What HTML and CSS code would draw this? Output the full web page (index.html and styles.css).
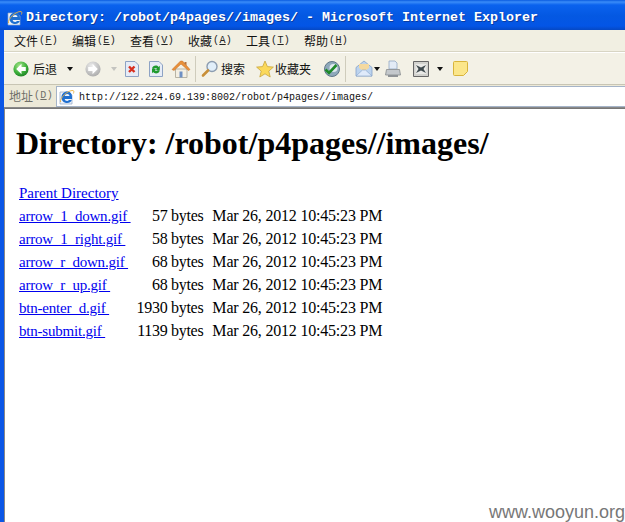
FILE: index.html
```html
<!DOCTYPE html>
<html lang="zh">
<head>
<meta charset="utf-8">
<title>Directory</title>
<link rel="stylesheet" href="styles.css">
</head>
<body>
<div class="window">
  <header class="titlebar">
    <svg class="ie-title" viewBox="0 0 16 16" width="16" height="16"><use href="#ie"/></svg>
    <span class="title-text">Directory: /robot/p4pages//images/ - Microsoft Internet Explorer</span>
  </header>
  <div class="frame">
    <nav class="menubar">
      <span class="menu">文件<small>(<u>F</u>)</small></span>
      <span class="menu">编辑<small>(<u>E</u>)</small></span>
      <span class="menu">查看<small>(<u>V</u>)</small></span>
      <span class="menu">收藏<small>(<u>A</u>)</small></span>
      <span class="menu">工具<small>(<u>T</u>)</small></span>
      <span class="menu">帮助<small>(<u>H</u>)</small></span>
    </nav>
    <div class="toolbar">
      <svg class="ico back" viewBox="0 0 22 22" width="22" height="22">
        <defs>
          <radialGradient id="g" cx="40%" cy="30%" r="75%"><stop offset="0" stop-color="#a5e58a"/><stop offset=".6" stop-color="#3fb13c"/><stop offset="1" stop-color="#1b7d22"/></radialGradient>
          <radialGradient id="s" cx="40%" cy="30%" r="75%"><stop offset="0" stop-color="#ececec"/><stop offset="1" stop-color="#a9a9a9"/></radialGradient>
        </defs>
        <circle cx="11" cy="11" r="7.6" fill="url(#g)"/>
        <path d="M11.500 5.800 6.200 11l5.300 5.200v-3.200h4.300V9h-4.300z" fill="#fff"/>
      </svg>
      <span class="tlabel back-label">后退</span>
      <span class="caret dark caret-back"></span>
      <svg class="ico forward" viewBox="0 0 22 22" width="22" height="22">
        <circle cx="11" cy="11" r="7.6" fill="url(#s)"/>
        <path d="M10.500 5.800 15.800 11l-5.300 5.200v-3.200H6.200V9h4.300z" fill="#fff"/>
      </svg>
      <span class="caret light caret-fwd"></span>
      <svg class="ico stop" viewBox="0 0 16 18" width="16" height="18">
        <path d="M1.500 1.500h9.500l3.500 3.500v11.500H1.500z" fill="#e6ecf7" stroke="#8ea3c4"/>
        <path d="m5 6.500 5.500 5.500m0-5.500L5 12" stroke="#d8301f" stroke-width="2.400"/>
      </svg>
      <svg class="ico refresh" viewBox="0 0 16 18" width="16" height="18">
        <path d="M1.500 1.500h9.500l3.500 3.500v11.500H1.500z" fill="#e6ecf7" stroke="#8ea3c4"/>
        <path d="M4 8.500C4.500 5.500 9 4.500 10.500 7l1.300-1.300v4.500H7.500l1.500-1.500C8 7.500 6.500 7.800 6 9z" fill="#1f9a2f"/>
        <path d="M11.800 10.500c-.5 3-5 4-6.500 1.500L4 13.300V8.800h4.300l-1.500 1.500c1 1.200 2.500.9 3-.3z" fill="#1f9a2f"/>
      </svg>
      <svg class="ico home" viewBox="0 0 20 20" width="20" height="20">
        <path d="M4.500 10h11.500v8.500H4.500z" fill="#f3efe3" stroke="#a8a494" stroke-width=".8"/>
        <path d="M8.500 12.500h3v6h-3z" fill="#6f90c4"/>
        <path d="M1 10.500 9.500 2h2l7.500 8.500-1.500 1L10 5l-7 6.500z" fill="#e8903a" stroke="#c56a20" stroke-width=".5"/>
        <path d="M13.500 3h2v3.500l-2-2z" fill="#b5733c"/>
      </svg>
      <span class="sep"></span>
      <svg class="ico search" viewBox="0 0 18 18" width="18" height="18">
        <circle cx="11" cy="6.500" r="5" fill="#e1effa" stroke="#8d9db0" stroke-width="1.400"/>
        <path d="m7 10.500-5 5" stroke="#c88f38" stroke-width="2.600" stroke-linecap="round"/>
      </svg>
      <span class="tlabel search-label">搜索</span>
      <svg class="ico star" viewBox="0 0 18 18" width="18" height="18">
        <path d="m9 1 2.400 5.600 6 .5-4.600 4 1.400 5.900L9 13.800 3.800 17l1.400-5.900-4.600-4 6-.5z" fill="#fbd95a" stroke="#c9a63d" stroke-width=".8"/>
      </svg>
      <span class="tlabel fav-label">收藏夹</span>
      <svg class="ico media" viewBox="0 0 18 18" width="18" height="18">
        <circle cx="9" cy="9" r="7.500" fill="#8fa9bb" stroke="#5e7688"/>
        <circle cx="10.500" cy="8" r="4" fill="#dfe9ef"/>
        <path d="M2.500 9.500 6 13l7.500-8" stroke="#1f8a2a" stroke-width="2.600" fill="none"/>
      </svg>
      <span class="sep sep2"></span>
      <svg class="ico mail" viewBox="0 0 18 18" width="18" height="18">
        <path d="M1 7.500 9 1l8 6.500V16H1z" fill="#bcd3ee" stroke="#85a2c8" stroke-width=".8"/>
        <path d="M4 8V4h10v4l-5 3.500z" fill="#f4d9a0"/>
        <path d="m1 16 6.500-6 3 0 6.500 6z" fill="#dfeafa" stroke="#85a2c8" stroke-width=".6"/>
      </svg>
      <span class="caret dark caret-mail"></span>
      <svg class="ico print" viewBox="0 0 16 18" width="16" height="18">
        <path d="M4 1h6l2 2v6H4z" fill="#e3ebf6" stroke="#93a8c4" stroke-width=".8"/>
        <path d="M1.500 9.500h13l1 5.500H.5z" fill="#c4c8cc" stroke="#868a8e" stroke-width=".8"/>
        <path d="M3 15h10v2H3z" fill="#8e9296"/>
      </svg>
      <svg class="ico word" viewBox="0 0 16 16" width="16" height="16">
        <path d="M.5.500h15v15H.5z" fill="#d2d2ce" stroke="#666"/>
        <path d="M2.500 3h11v10h-11z" fill="#e9e9e6"/>
        <path d="m3 4 5 2.500L13 4l-2.500 4 2.500 4-5-2.500L3 12l2.500-4z" fill="#3f4a4e"/>
      </svg>
      <span class="caret dark caret-word"></span>
      <svg class="ico note" viewBox="0 0 15 15" width="15" height="15">
        <path d="M1.500.500h12a1 1 0 0 1 1 1v9l-4 4h-9a1 1 0 0 1-1-1v-12a1 1 0 0 1 1-1z" fill="#fbe68b" stroke="#d8b43c"/>
      </svg>
    </div>
    <div class="addressbar">
      <span class="addr-label">地址<small>(<u>D</u>)</small></span>
      <div class="addr-field">
        <svg class="ie-addr" viewBox="0 0 16 16" width="16" height="16">
          <symbol id="ie" viewBox="0 0 16 16">
            <path d="M1 3h9l3 3v9H1z" fill="#eef3fb" stroke="#8ea3c4" stroke-width=".7"/>
            <path d="M3.500 8h9.500c.2-3.400-2-5.500-4.700-5.500C5 2.500 2.500 5 2.500 8.500c0 3.300 2.500 5.500 5.600 5.500 2.400 0 4-1.100 4.700-3H9.900c-.4.700-1 1-1.800 1-1.300 0-2.300-.8-2.400-2H13V8M5.700 7c.2-1.200 1.200-2 2.500-2s2.200.8 2.300 2z" fill="#1f6fd0" fill-rule="evenodd"/>
            <path d="M1.500 13C.5 9 9 1 14 1.500c1 .2 1 1.500.4 3" fill="none" stroke="#e9b040" stroke-width=".9"/>
          </symbol>
          <use href="#ie"/>
        </svg>
        <span class="url">http://122.224.69.139:8002/robot/p4pages//images/</span>
      </div>
    </div>
    <main class="page">
      <h1>Directory: /robot/p4pages//images/</h1>
      <table class="listing">
        <tr><td colspan="3"><a class="parent" href="#">Parent Directory</a></td></tr>
        <tr><td class="name"><a href="#">arrow_1_down.gif&nbsp;</a></td><td class="size">57 bytes</td><td class="date">Mar 26, 2012 10:45:23 PM</td></tr>
        <tr><td class="name"><a href="#">arrow_1_right.gif&nbsp;</a></td><td class="size">58 bytes</td><td class="date">Mar 26, 2012 10:45:23 PM</td></tr>
        <tr><td class="name"><a href="#">arrow_r_down.gif&nbsp;</a></td><td class="size">68 bytes</td><td class="date">Mar 26, 2012 10:45:23 PM</td></tr>
        <tr><td class="name"><a href="#">arrow_r_up.gif&nbsp;</a></td><td class="size">68 bytes</td><td class="date">Mar 26, 2012 10:45:23 PM</td></tr>
        <tr><td class="name"><a href="#">btn-enter_d.gif&nbsp;</a></td><td class="size">1930 bytes</td><td class="date">Mar 26, 2012 10:45:23 PM</td></tr>
        <tr><td class="name"><a href="#">btn-submit.gif&nbsp;</a></td><td class="size">1139 bytes</td><td class="date">Mar 26, 2012 10:45:23 PM</td></tr>
      </table>
    </main>
  </div>
  <div class="watermark">www.wooyun.org</div>
</div>
</body>
</html>
```

FILE: styles.css
```css
* { box-sizing: border-box; }
html, body { margin: 0; padding: 0; }
body { width: 625px; height: 522px; overflow: hidden; background: #fff; }
.window { position: relative; width: 625px; height: 522px; display: flex; flex-direction: column; background: #0a56e6; overflow: hidden; }
.titlebar {
  height: 30px; flex: none; display: flex; align-items: center; gap: 3px; padding: 5px 0 0 7px;
  background: linear-gradient(#0a5be0 0, #3a8cf8 2px, #0a62ee 5px, #0458e2 16px, #0355e6 26px, #0548c4 30px);
}
.title-text { font: bold 13.33px/16px "Liberation Mono", monospace; color: #fff; white-space: pre; text-shadow: 1px 1px 0 #0a3ca0; }
.frame { flex: 1; margin-left: 4px; display: flex; flex-direction: column; min-height: 0; }
.menubar { height: 22px; flex: none; display: flex; align-items: center; gap: 17px; padding: 0 0 0 10px; background: #f1efe2; border-bottom: 1px solid #d8d5c4; }
.menu { font: 12px/16px "Noto Sans CJK SC", sans-serif; color: #111; display: flex; }
small { font: 10px/16px "Liberation Mono", monospace; color: #222; width: 17px; padding-left: 1px; white-space: nowrap; letter-spacing: .3px; }
.toolbar { height: 33px; flex: none; display: flex; align-items: center; background: #f3f1e6; border-top: 1px solid #fff; border-bottom: 1px solid #c8c5b4; padding-left: 6px; }
.ico { flex: none; display: block; }
.tlabel { font: 12px/16px "Noto Sans CJK SC", sans-serif; color: #111; flex: none; }
.back-label { margin-left: 1px; }
.caret { flex: none; width: 0; height: 0; border-left: 3.500px solid transparent; border-right: 3.500px solid transparent; border-top: 4px solid #111; }
.caret.light { border-top-color: #c4c4c0; }
.caret-back { margin-left: 10px; }
.forward { margin-left: 9px; }
.caret-fwd { margin-left: 7px; }
.stop { margin-left: 7px; }
.refresh { margin-left: 8px; }
.home { margin-left: 7px; }
.sep { flex: none; width: 1px; height: 26px; background: #cfccbc; margin-left: 4px; }
.search { margin-left: 5px; }
.search-label { margin-left: 2px; }
.star { margin-left: 11px; }
.fav-label { margin-left: 1px; }
.media { margin-left: 12px; }
.sep2 { margin-left: 4px; }
.mail { margin-left: 9px; }
.caret-mail { margin-left: 1px; }
.print { margin-left: 5px; }
.word { margin-left: 12px; }
.caret-word { margin-left: 8px; }
.note { margin-left: 10px; }
.addressbar { height: 23px; flex: none; display: flex; align-items: center; background: #ece9d8; padding-left: 5px; border-bottom: 1px solid #888; }
.addr-label { font: 12px/16px "Noto Sans CJK SC", sans-serif; color: #6f6f68; display: flex; width: 47px; flex: none; }
.addr-label small { color: #6f6f68; }
.addr-field { flex: 1; height: 21px; margin-top: 1px; background: #fff; border: 1px solid #a5b4c8; border-right: 0; display: flex; align-items: center; padding-left: 2px; gap: 4px; }
.url { font: 10px/14px "Liberation Mono", monospace; color: #111; white-space: pre; padding-top: 3px; }
.page { flex: 1; background: #fff; border-left: 1px solid #888; border-top: 1px solid #777; padding: 0 0 0 11px; min-height: 0; }
h1 { font: bold 32px/37px "Liberation Serif", serif; color: #000; margin: 16px 0 0 0; white-space: nowrap; }
.listing { border-collapse: separate; border-spacing: 2px; margin-top: 19px; font: 16px/18px "Liberation Serif", serif; color: #000; }
.listing td { padding: 1px 1px 2px; white-space: nowrap; }
.listing a { color: #0000ee; text-decoration: underline; font-size: 15px; letter-spacing: -.2px; }
.listing a.parent { letter-spacing: 0; }
.listing td.name { padding-right: 3px; }
.listing td.size { text-align: right; padding-right: 5px; letter-spacing: -.3px; }
.listing td.date { padding-left: 2px; letter-spacing: -.2px; }
.watermark { position: absolute; right: 0; bottom: 0; font: 18px/20px "Liberation Sans", sans-serif; color: #777; white-space: nowrap; }
```
